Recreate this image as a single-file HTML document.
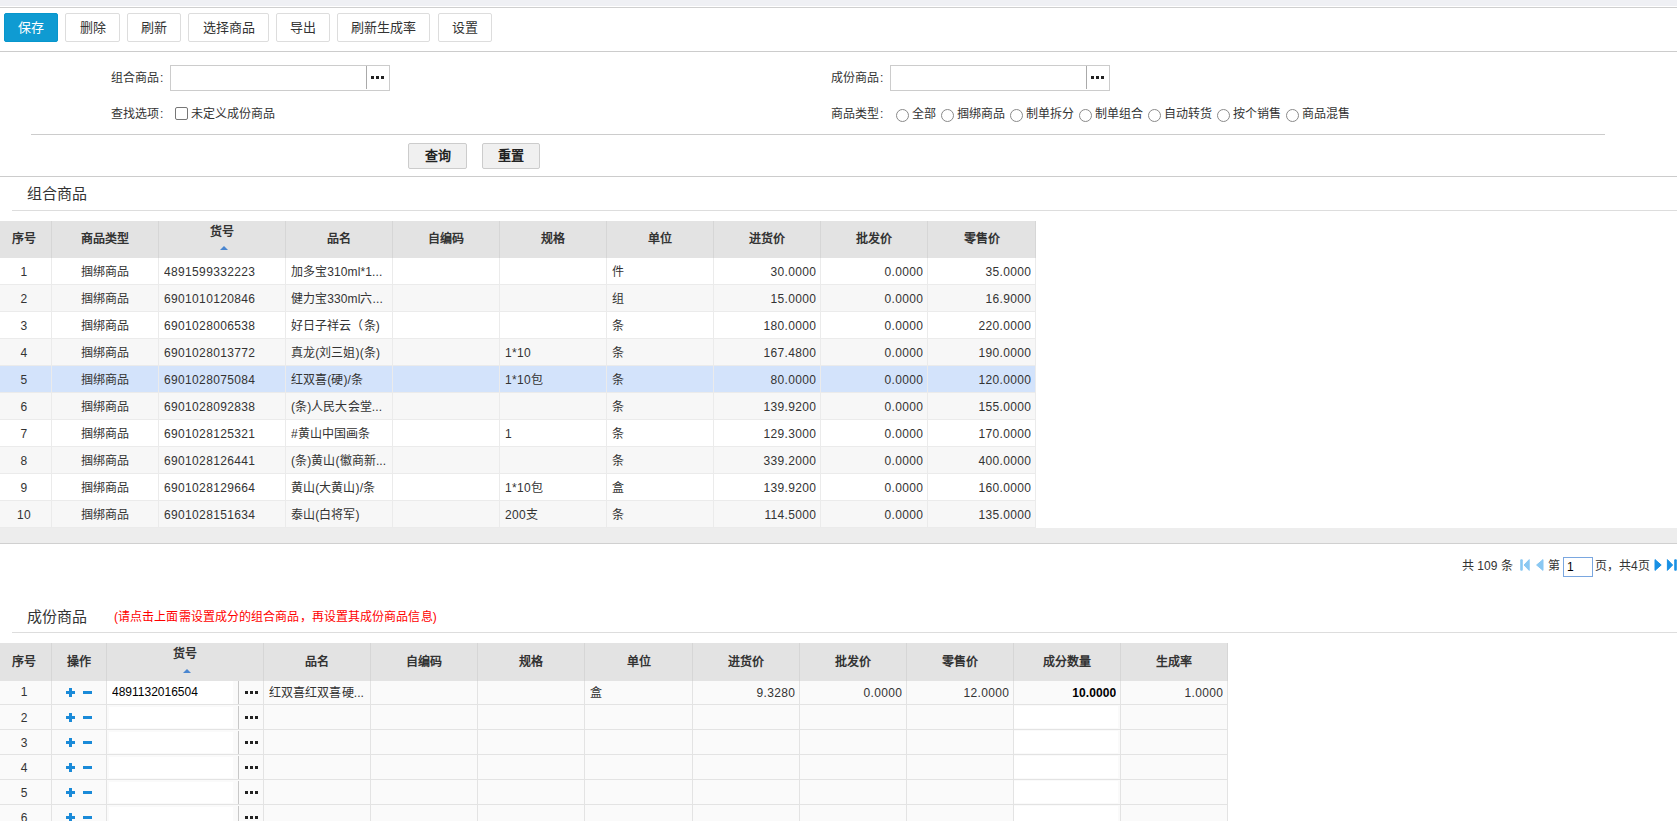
<!DOCTYPE html>
<html lang="zh-CN"><head><meta charset="utf-8"><style>
*{box-sizing:border-box;margin:0;padding:0}
html,body{width:1677px;height:821px;overflow:hidden;background:#fff;font-family:"Liberation Sans",sans-serif;font-size:12px;color:#333}
div{position:absolute}
.tb{top:13px;height:29px;border:1px solid #ddd;border-radius:2px;background:#fff;font-size:13px;line-height:28px;text-align:center;color:#333}
.tb.pri{background:#0f9bd2;border-color:#0796cc;color:#fff}
.lbl{font-size:12px;line-height:16px;color:#333;white-space:nowrap}
.inp{height:26px;border:1px solid #ccc;background:#fff}
.vd{width:1px;background:#aaa}
.dt{width:3px;height:3px;background:#222}
.chk{width:13px;height:13px;border:1px solid #767676;border-radius:2px;background:#fff}
.rad{width:13px;height:13px;border:1px solid #8a8a8a;border-radius:50%;background:#fff}
.qb{top:143px;height:26px;border:1px solid #ccc;border-radius:2px;background:#f0f0f0;font-size:13px;font-weight:bold;line-height:24px;text-align:center;color:#222}
.hl{height:1px;background:#ddd}
.title{font-size:15px;line-height:20px;color:#333;white-space:nowrap}
.cell{white-space:nowrap;overflow:hidden;font-size:12px;color:#333}
.th{font-weight:bold;color:#333;text-align:center}
.arr{width:0;height:0;border-left:4.5px solid transparent;border-right:4.5px solid transparent;border-bottom:4px solid #4a86d0}
.pl{background:#1a8ad8}
</style></head><body>
<div style="left:0;top:0;width:1677px;height:6px;background:#eff0f4"></div>
<div style="left:0;top:7px;width:1677px;height:1px;background:#cfcfcf"></div>
<div class="tb pri" style="left:4px;width:54px">保存</div>
<div class="tb" style="left:65px;width:55px">删除</div>
<div class="tb" style="left:127px;width:54px">刷新</div>
<div class="tb" style="left:188px;width:81px">选择商品</div>
<div class="tb" style="left:276px;width:54px">导出</div>
<div class="tb" style="left:337px;width:93px">刷新生成率</div>
<div class="tb" style="left:438px;width:54px">设置</div>
<div class="hl" style="left:0;top:51px;width:1677px;background:#ccc"></div>
<div class="lbl" style="left:111px;top:70px;">组合商品<span style="margin-left:1px">:</span></div>
<div class="inp" style="left:170px;top:65px;width:220px"></div>
<div class="vd" style="left:366px;top:66px;height:23px"></div>
<div class="dt" style="left:371px;top:76px;background:#222"></div>
<div class="dt" style="left:376px;top:76px;background:#222"></div>
<div class="dt" style="left:381px;top:76px;background:#222"></div>
<div class="lbl" style="left:111px;top:106px;">查找选项<span style="margin-left:1px">:</span></div>
<div class="chk" style="left:175px;top:107px"></div>
<div class="lbl" style="left:191px;top:106px;">未定义成份商品</div>
<div class="lbl" style="left:831px;top:70px;">成份商品<span style="margin-left:1px">:</span></div>
<div class="inp" style="left:890px;top:65px;width:220px"></div>
<div class="vd" style="left:1086px;top:66px;height:23px"></div>
<div class="dt" style="left:1091px;top:76px;background:#222"></div>
<div class="dt" style="left:1096px;top:76px;background:#222"></div>
<div class="dt" style="left:1101px;top:76px;background:#222"></div>
<div class="lbl" style="left:831px;top:106px;">商品类型<span style="margin-left:1px">:</span></div>
<div class="rad" style="left:896px;top:109px"></div>
<div class="lbl" style="left:912px;top:106px;">全部</div>
<div class="rad" style="left:941px;top:109px"></div>
<div class="lbl" style="left:957px;top:106px;">掴绑商品</div>
<div class="rad" style="left:1010px;top:109px"></div>
<div class="lbl" style="left:1026px;top:106px;">制单拆分</div>
<div class="rad" style="left:1079px;top:109px"></div>
<div class="lbl" style="left:1095px;top:106px;">制单组合</div>
<div class="rad" style="left:1148px;top:109px"></div>
<div class="lbl" style="left:1164px;top:106px;">自动转货</div>
<div class="rad" style="left:1217px;top:109px"></div>
<div class="lbl" style="left:1233px;top:106px;">按个销售</div>
<div class="rad" style="left:1286px;top:109px"></div>
<div class="lbl" style="left:1302px;top:106px;">商品混售</div>
<div class="hl" style="left:31px;top:134px;width:1574px;background:#ccc"></div>
<div class="qb" style="left:408px;width:59px">查询</div>
<div class="qb" style="left:482px;width:58px">重置</div>
<div class="hl" style="left:0;top:176px;width:1677px;background:#ccc"></div>
<div class="title" style="left:27px;top:184px">组合商品</div>
<div class="hl" style="left:12px;top:210px;width:1665px"></div>
<div style="left:0;top:221px;width:1036px;height:37px;background:#e3e3e3"></div>
<div style="left:51px;top:221px;width:1px;height:37px;background:#d6d6d6"></div>
<div style="left:158px;top:221px;width:1px;height:37px;background:#d6d6d6"></div>
<div style="left:285px;top:221px;width:1px;height:37px;background:#d6d6d6"></div>
<div style="left:392px;top:221px;width:1px;height:37px;background:#d6d6d6"></div>
<div style="left:499px;top:221px;width:1px;height:37px;background:#d6d6d6"></div>
<div style="left:606px;top:221px;width:1px;height:37px;background:#d6d6d6"></div>
<div style="left:713px;top:221px;width:1px;height:37px;background:#d6d6d6"></div>
<div style="left:820px;top:221px;width:1px;height:37px;background:#d6d6d6"></div>
<div style="left:927px;top:221px;width:1px;height:37px;background:#d6d6d6"></div>
<div style="left:1035px;top:221px;width:1px;height:37px;background:#d6d6d6"></div>
<div class="cell th" style="left:0px;top:221px;width:48px;height:37px;line-height:37px">序号</div>
<div class="cell th" style="left:52px;top:221px;width:106px;height:37px;line-height:37px">商品类型</div>
<div class="cell th" style="left:159px;top:224px;width:126px;height:16px;line-height:16px">货号</div>
<div class="arr" style="left:220px;top:246px"></div>
<div class="cell th" style="left:286px;top:221px;width:106px;height:37px;line-height:37px">品名</div>
<div class="cell th" style="left:393px;top:221px;width:106px;height:37px;line-height:37px">自编码</div>
<div class="cell th" style="left:500px;top:221px;width:106px;height:37px;line-height:37px">规格</div>
<div class="cell th" style="left:607px;top:221px;width:106px;height:37px;line-height:37px">单位</div>
<div class="cell th" style="left:714px;top:221px;width:106px;height:37px;line-height:37px">进货价</div>
<div class="cell th" style="left:821px;top:221px;width:106px;height:37px;line-height:37px">批发价</div>
<div class="cell th" style="left:928px;top:221px;width:107px;height:37px;line-height:37px">零售价</div>
<div style="left:0;top:258px;width:1035px;height:27px;background:#fff"></div>
<div style="left:0;top:284px;width:1035px;height:1px;background:#ebebeb"></div>
<div style="left:51px;top:258px;width:1px;height:27px;background:#ebebeb"></div>
<div style="left:158px;top:258px;width:1px;height:27px;background:#ebebeb"></div>
<div style="left:285px;top:258px;width:1px;height:27px;background:#ebebeb"></div>
<div style="left:392px;top:258px;width:1px;height:27px;background:#ebebeb"></div>
<div style="left:499px;top:258px;width:1px;height:27px;background:#ebebeb"></div>
<div style="left:606px;top:258px;width:1px;height:27px;background:#ebebeb"></div>
<div style="left:713px;top:258px;width:1px;height:27px;background:#ebebeb"></div>
<div style="left:820px;top:258px;width:1px;height:27px;background:#ebebeb"></div>
<div style="left:927px;top:258px;width:1px;height:27px;background:#ebebeb"></div>
<div style="left:1035px;top:258px;width:1px;height:27px;background:#ebebeb"></div>
<div class="cell" style="left:0px;width:48px;text-align:center;top:259px;height:26px;line-height:26px;letter-spacing:0.35px">1</div>
<div class="cell" style="left:52px;width:106px;text-align:center;top:259px;height:26px;line-height:26px">掴绑商品</div>
<div class="cell" style="left:164px;width:121px;text-align:left;top:259px;height:26px;line-height:26px;letter-spacing:0.35px">4891599332223</div>
<div class="cell" style="left:291px;width:101px;text-align:left;top:259px;height:26px;line-height:26px;letter-spacing:0.1px">加多宝310ml*1...</div>
<div class="cell" style="left:612px;width:101px;text-align:left;top:259px;height:26px;line-height:26px">件</div>
<div class="cell" style="left:714px;width:102.4px;text-align:right;top:259px;height:26px;line-height:26px;letter-spacing:0.35px">30.0000</div>
<div class="cell" style="left:821px;width:102.4px;text-align:right;top:259px;height:26px;line-height:26px;letter-spacing:0.35px">0.0000</div>
<div class="cell" style="left:928px;width:103.4px;text-align:right;top:259px;height:26px;line-height:26px;letter-spacing:0.35px">35.0000</div>
<div style="left:0;top:285px;width:1035px;height:27px;background:#f7f7f7"></div>
<div style="left:0;top:311px;width:1035px;height:1px;background:#ebebeb"></div>
<div style="left:51px;top:285px;width:1px;height:27px;background:#ebebeb"></div>
<div style="left:158px;top:285px;width:1px;height:27px;background:#ebebeb"></div>
<div style="left:285px;top:285px;width:1px;height:27px;background:#ebebeb"></div>
<div style="left:392px;top:285px;width:1px;height:27px;background:#ebebeb"></div>
<div style="left:499px;top:285px;width:1px;height:27px;background:#ebebeb"></div>
<div style="left:606px;top:285px;width:1px;height:27px;background:#ebebeb"></div>
<div style="left:713px;top:285px;width:1px;height:27px;background:#ebebeb"></div>
<div style="left:820px;top:285px;width:1px;height:27px;background:#ebebeb"></div>
<div style="left:927px;top:285px;width:1px;height:27px;background:#ebebeb"></div>
<div style="left:1035px;top:285px;width:1px;height:27px;background:#ebebeb"></div>
<div class="cell" style="left:0px;width:48px;text-align:center;top:286px;height:26px;line-height:26px;letter-spacing:0.35px">2</div>
<div class="cell" style="left:52px;width:106px;text-align:center;top:286px;height:26px;line-height:26px">掴绑商品</div>
<div class="cell" style="left:164px;width:121px;text-align:left;top:286px;height:26px;line-height:26px;letter-spacing:0.35px">6901010120846</div>
<div class="cell" style="left:291px;width:101px;text-align:left;top:286px;height:26px;line-height:26px;letter-spacing:0.1px">健力宝330ml六...</div>
<div class="cell" style="left:612px;width:101px;text-align:left;top:286px;height:26px;line-height:26px">组</div>
<div class="cell" style="left:714px;width:102.4px;text-align:right;top:286px;height:26px;line-height:26px;letter-spacing:0.35px">15.0000</div>
<div class="cell" style="left:821px;width:102.4px;text-align:right;top:286px;height:26px;line-height:26px;letter-spacing:0.35px">0.0000</div>
<div class="cell" style="left:928px;width:103.4px;text-align:right;top:286px;height:26px;line-height:26px;letter-spacing:0.35px">16.9000</div>
<div style="left:0;top:312px;width:1035px;height:27px;background:#fff"></div>
<div style="left:0;top:338px;width:1035px;height:1px;background:#ebebeb"></div>
<div style="left:51px;top:312px;width:1px;height:27px;background:#ebebeb"></div>
<div style="left:158px;top:312px;width:1px;height:27px;background:#ebebeb"></div>
<div style="left:285px;top:312px;width:1px;height:27px;background:#ebebeb"></div>
<div style="left:392px;top:312px;width:1px;height:27px;background:#ebebeb"></div>
<div style="left:499px;top:312px;width:1px;height:27px;background:#ebebeb"></div>
<div style="left:606px;top:312px;width:1px;height:27px;background:#ebebeb"></div>
<div style="left:713px;top:312px;width:1px;height:27px;background:#ebebeb"></div>
<div style="left:820px;top:312px;width:1px;height:27px;background:#ebebeb"></div>
<div style="left:927px;top:312px;width:1px;height:27px;background:#ebebeb"></div>
<div style="left:1035px;top:312px;width:1px;height:27px;background:#ebebeb"></div>
<div class="cell" style="left:0px;width:48px;text-align:center;top:313px;height:26px;line-height:26px;letter-spacing:0.35px">3</div>
<div class="cell" style="left:52px;width:106px;text-align:center;top:313px;height:26px;line-height:26px">掴绑商品</div>
<div class="cell" style="left:164px;width:121px;text-align:left;top:313px;height:26px;line-height:26px;letter-spacing:0.35px">6901028006538</div>
<div class="cell" style="left:291px;width:101px;text-align:left;top:313px;height:26px;line-height:26px;letter-spacing:0.1px">好日子祥云（条)</div>
<div class="cell" style="left:612px;width:101px;text-align:left;top:313px;height:26px;line-height:26px">条</div>
<div class="cell" style="left:714px;width:102.4px;text-align:right;top:313px;height:26px;line-height:26px;letter-spacing:0.35px">180.0000</div>
<div class="cell" style="left:821px;width:102.4px;text-align:right;top:313px;height:26px;line-height:26px;letter-spacing:0.35px">0.0000</div>
<div class="cell" style="left:928px;width:103.4px;text-align:right;top:313px;height:26px;line-height:26px;letter-spacing:0.35px">220.0000</div>
<div style="left:0;top:339px;width:1035px;height:27px;background:#f7f7f7"></div>
<div style="left:0;top:365px;width:1035px;height:1px;background:#ebebeb"></div>
<div style="left:51px;top:339px;width:1px;height:27px;background:#ebebeb"></div>
<div style="left:158px;top:339px;width:1px;height:27px;background:#ebebeb"></div>
<div style="left:285px;top:339px;width:1px;height:27px;background:#ebebeb"></div>
<div style="left:392px;top:339px;width:1px;height:27px;background:#ebebeb"></div>
<div style="left:499px;top:339px;width:1px;height:27px;background:#ebebeb"></div>
<div style="left:606px;top:339px;width:1px;height:27px;background:#ebebeb"></div>
<div style="left:713px;top:339px;width:1px;height:27px;background:#ebebeb"></div>
<div style="left:820px;top:339px;width:1px;height:27px;background:#ebebeb"></div>
<div style="left:927px;top:339px;width:1px;height:27px;background:#ebebeb"></div>
<div style="left:1035px;top:339px;width:1px;height:27px;background:#ebebeb"></div>
<div class="cell" style="left:0px;width:48px;text-align:center;top:340px;height:26px;line-height:26px;letter-spacing:0.35px">4</div>
<div class="cell" style="left:52px;width:106px;text-align:center;top:340px;height:26px;line-height:26px">掴绑商品</div>
<div class="cell" style="left:164px;width:121px;text-align:left;top:340px;height:26px;line-height:26px;letter-spacing:0.35px">6901028013772</div>
<div class="cell" style="left:291px;width:101px;text-align:left;top:340px;height:26px;line-height:26px;letter-spacing:0.1px">真龙(刘三姐)(条)</div>
<div class="cell" style="left:505px;width:101px;text-align:left;top:340px;height:26px;line-height:26px;letter-spacing:0.3px">1*10</div>
<div class="cell" style="left:612px;width:101px;text-align:left;top:340px;height:26px;line-height:26px">条</div>
<div class="cell" style="left:714px;width:102.4px;text-align:right;top:340px;height:26px;line-height:26px;letter-spacing:0.35px">167.4800</div>
<div class="cell" style="left:821px;width:102.4px;text-align:right;top:340px;height:26px;line-height:26px;letter-spacing:0.35px">0.0000</div>
<div class="cell" style="left:928px;width:103.4px;text-align:right;top:340px;height:26px;line-height:26px;letter-spacing:0.35px">190.0000</div>
<div style="left:0;top:366px;width:1035px;height:27px;background:#d3e3fb"></div>
<div style="left:0;top:392px;width:1035px;height:1px;background:#ebebeb"></div>
<div style="left:51px;top:366px;width:1px;height:27px;background:#ebebeb"></div>
<div style="left:158px;top:366px;width:1px;height:27px;background:#ebebeb"></div>
<div style="left:285px;top:366px;width:1px;height:27px;background:#ebebeb"></div>
<div style="left:392px;top:366px;width:1px;height:27px;background:#ebebeb"></div>
<div style="left:499px;top:366px;width:1px;height:27px;background:#ebebeb"></div>
<div style="left:606px;top:366px;width:1px;height:27px;background:#ebebeb"></div>
<div style="left:713px;top:366px;width:1px;height:27px;background:#ebebeb"></div>
<div style="left:820px;top:366px;width:1px;height:27px;background:#ebebeb"></div>
<div style="left:927px;top:366px;width:1px;height:27px;background:#ebebeb"></div>
<div style="left:1035px;top:366px;width:1px;height:27px;background:#ebebeb"></div>
<div class="cell" style="left:0px;width:48px;text-align:center;top:367px;height:26px;line-height:26px;letter-spacing:0.35px">5</div>
<div class="cell" style="left:52px;width:106px;text-align:center;top:367px;height:26px;line-height:26px">掴绑商品</div>
<div class="cell" style="left:164px;width:121px;text-align:left;top:367px;height:26px;line-height:26px;letter-spacing:0.35px">6901028075084</div>
<div class="cell" style="left:291px;width:101px;text-align:left;top:367px;height:26px;line-height:26px;letter-spacing:0.1px">红双喜(硬)/条</div>
<div class="cell" style="left:505px;width:101px;text-align:left;top:367px;height:26px;line-height:26px;letter-spacing:0.3px">1*10包</div>
<div class="cell" style="left:612px;width:101px;text-align:left;top:367px;height:26px;line-height:26px">条</div>
<div class="cell" style="left:714px;width:102.4px;text-align:right;top:367px;height:26px;line-height:26px;letter-spacing:0.35px">80.0000</div>
<div class="cell" style="left:821px;width:102.4px;text-align:right;top:367px;height:26px;line-height:26px;letter-spacing:0.35px">0.0000</div>
<div class="cell" style="left:928px;width:103.4px;text-align:right;top:367px;height:26px;line-height:26px;letter-spacing:0.35px">120.0000</div>
<div style="left:0;top:393px;width:1035px;height:27px;background:#f7f7f7"></div>
<div style="left:0;top:419px;width:1035px;height:1px;background:#ebebeb"></div>
<div style="left:51px;top:393px;width:1px;height:27px;background:#ebebeb"></div>
<div style="left:158px;top:393px;width:1px;height:27px;background:#ebebeb"></div>
<div style="left:285px;top:393px;width:1px;height:27px;background:#ebebeb"></div>
<div style="left:392px;top:393px;width:1px;height:27px;background:#ebebeb"></div>
<div style="left:499px;top:393px;width:1px;height:27px;background:#ebebeb"></div>
<div style="left:606px;top:393px;width:1px;height:27px;background:#ebebeb"></div>
<div style="left:713px;top:393px;width:1px;height:27px;background:#ebebeb"></div>
<div style="left:820px;top:393px;width:1px;height:27px;background:#ebebeb"></div>
<div style="left:927px;top:393px;width:1px;height:27px;background:#ebebeb"></div>
<div style="left:1035px;top:393px;width:1px;height:27px;background:#ebebeb"></div>
<div class="cell" style="left:0px;width:48px;text-align:center;top:394px;height:26px;line-height:26px;letter-spacing:0.35px">6</div>
<div class="cell" style="left:52px;width:106px;text-align:center;top:394px;height:26px;line-height:26px">掴绑商品</div>
<div class="cell" style="left:164px;width:121px;text-align:left;top:394px;height:26px;line-height:26px;letter-spacing:0.35px">6901028092838</div>
<div class="cell" style="left:291px;width:101px;text-align:left;top:394px;height:26px;line-height:26px;letter-spacing:0.1px">(条)人民大会堂...</div>
<div class="cell" style="left:612px;width:101px;text-align:left;top:394px;height:26px;line-height:26px">条</div>
<div class="cell" style="left:714px;width:102.4px;text-align:right;top:394px;height:26px;line-height:26px;letter-spacing:0.35px">139.9200</div>
<div class="cell" style="left:821px;width:102.4px;text-align:right;top:394px;height:26px;line-height:26px;letter-spacing:0.35px">0.0000</div>
<div class="cell" style="left:928px;width:103.4px;text-align:right;top:394px;height:26px;line-height:26px;letter-spacing:0.35px">155.0000</div>
<div style="left:0;top:420px;width:1035px;height:27px;background:#fff"></div>
<div style="left:0;top:446px;width:1035px;height:1px;background:#ebebeb"></div>
<div style="left:51px;top:420px;width:1px;height:27px;background:#ebebeb"></div>
<div style="left:158px;top:420px;width:1px;height:27px;background:#ebebeb"></div>
<div style="left:285px;top:420px;width:1px;height:27px;background:#ebebeb"></div>
<div style="left:392px;top:420px;width:1px;height:27px;background:#ebebeb"></div>
<div style="left:499px;top:420px;width:1px;height:27px;background:#ebebeb"></div>
<div style="left:606px;top:420px;width:1px;height:27px;background:#ebebeb"></div>
<div style="left:713px;top:420px;width:1px;height:27px;background:#ebebeb"></div>
<div style="left:820px;top:420px;width:1px;height:27px;background:#ebebeb"></div>
<div style="left:927px;top:420px;width:1px;height:27px;background:#ebebeb"></div>
<div style="left:1035px;top:420px;width:1px;height:27px;background:#ebebeb"></div>
<div class="cell" style="left:0px;width:48px;text-align:center;top:421px;height:26px;line-height:26px;letter-spacing:0.35px">7</div>
<div class="cell" style="left:52px;width:106px;text-align:center;top:421px;height:26px;line-height:26px">掴绑商品</div>
<div class="cell" style="left:164px;width:121px;text-align:left;top:421px;height:26px;line-height:26px;letter-spacing:0.35px">6901028125321</div>
<div class="cell" style="left:291px;width:101px;text-align:left;top:421px;height:26px;line-height:26px;letter-spacing:0.1px">#黄山中国画条</div>
<div class="cell" style="left:505px;width:101px;text-align:left;top:421px;height:26px;line-height:26px;letter-spacing:0.3px">1</div>
<div class="cell" style="left:612px;width:101px;text-align:left;top:421px;height:26px;line-height:26px">条</div>
<div class="cell" style="left:714px;width:102.4px;text-align:right;top:421px;height:26px;line-height:26px;letter-spacing:0.35px">129.3000</div>
<div class="cell" style="left:821px;width:102.4px;text-align:right;top:421px;height:26px;line-height:26px;letter-spacing:0.35px">0.0000</div>
<div class="cell" style="left:928px;width:103.4px;text-align:right;top:421px;height:26px;line-height:26px;letter-spacing:0.35px">170.0000</div>
<div style="left:0;top:447px;width:1035px;height:27px;background:#f7f7f7"></div>
<div style="left:0;top:473px;width:1035px;height:1px;background:#ebebeb"></div>
<div style="left:51px;top:447px;width:1px;height:27px;background:#ebebeb"></div>
<div style="left:158px;top:447px;width:1px;height:27px;background:#ebebeb"></div>
<div style="left:285px;top:447px;width:1px;height:27px;background:#ebebeb"></div>
<div style="left:392px;top:447px;width:1px;height:27px;background:#ebebeb"></div>
<div style="left:499px;top:447px;width:1px;height:27px;background:#ebebeb"></div>
<div style="left:606px;top:447px;width:1px;height:27px;background:#ebebeb"></div>
<div style="left:713px;top:447px;width:1px;height:27px;background:#ebebeb"></div>
<div style="left:820px;top:447px;width:1px;height:27px;background:#ebebeb"></div>
<div style="left:927px;top:447px;width:1px;height:27px;background:#ebebeb"></div>
<div style="left:1035px;top:447px;width:1px;height:27px;background:#ebebeb"></div>
<div class="cell" style="left:0px;width:48px;text-align:center;top:448px;height:26px;line-height:26px;letter-spacing:0.35px">8</div>
<div class="cell" style="left:52px;width:106px;text-align:center;top:448px;height:26px;line-height:26px">掴绑商品</div>
<div class="cell" style="left:164px;width:121px;text-align:left;top:448px;height:26px;line-height:26px;letter-spacing:0.35px">6901028126441</div>
<div class="cell" style="left:291px;width:101px;text-align:left;top:448px;height:26px;line-height:26px;letter-spacing:0.1px">(条)黄山(徽商新...</div>
<div class="cell" style="left:612px;width:101px;text-align:left;top:448px;height:26px;line-height:26px">条</div>
<div class="cell" style="left:714px;width:102.4px;text-align:right;top:448px;height:26px;line-height:26px;letter-spacing:0.35px">339.2000</div>
<div class="cell" style="left:821px;width:102.4px;text-align:right;top:448px;height:26px;line-height:26px;letter-spacing:0.35px">0.0000</div>
<div class="cell" style="left:928px;width:103.4px;text-align:right;top:448px;height:26px;line-height:26px;letter-spacing:0.35px">400.0000</div>
<div style="left:0;top:474px;width:1035px;height:27px;background:#fff"></div>
<div style="left:0;top:500px;width:1035px;height:1px;background:#ebebeb"></div>
<div style="left:51px;top:474px;width:1px;height:27px;background:#ebebeb"></div>
<div style="left:158px;top:474px;width:1px;height:27px;background:#ebebeb"></div>
<div style="left:285px;top:474px;width:1px;height:27px;background:#ebebeb"></div>
<div style="left:392px;top:474px;width:1px;height:27px;background:#ebebeb"></div>
<div style="left:499px;top:474px;width:1px;height:27px;background:#ebebeb"></div>
<div style="left:606px;top:474px;width:1px;height:27px;background:#ebebeb"></div>
<div style="left:713px;top:474px;width:1px;height:27px;background:#ebebeb"></div>
<div style="left:820px;top:474px;width:1px;height:27px;background:#ebebeb"></div>
<div style="left:927px;top:474px;width:1px;height:27px;background:#ebebeb"></div>
<div style="left:1035px;top:474px;width:1px;height:27px;background:#ebebeb"></div>
<div class="cell" style="left:0px;width:48px;text-align:center;top:475px;height:26px;line-height:26px;letter-spacing:0.35px">9</div>
<div class="cell" style="left:52px;width:106px;text-align:center;top:475px;height:26px;line-height:26px">掴绑商品</div>
<div class="cell" style="left:164px;width:121px;text-align:left;top:475px;height:26px;line-height:26px;letter-spacing:0.35px">6901028129664</div>
<div class="cell" style="left:291px;width:101px;text-align:left;top:475px;height:26px;line-height:26px;letter-spacing:0.1px">黄山(大黄山)/条</div>
<div class="cell" style="left:505px;width:101px;text-align:left;top:475px;height:26px;line-height:26px;letter-spacing:0.3px">1*10包</div>
<div class="cell" style="left:612px;width:101px;text-align:left;top:475px;height:26px;line-height:26px">盒</div>
<div class="cell" style="left:714px;width:102.4px;text-align:right;top:475px;height:26px;line-height:26px;letter-spacing:0.35px">139.9200</div>
<div class="cell" style="left:821px;width:102.4px;text-align:right;top:475px;height:26px;line-height:26px;letter-spacing:0.35px">0.0000</div>
<div class="cell" style="left:928px;width:103.4px;text-align:right;top:475px;height:26px;line-height:26px;letter-spacing:0.35px">160.0000</div>
<div style="left:0;top:501px;width:1035px;height:27px;background:#f7f7f7"></div>
<div style="left:0;top:527px;width:1035px;height:1px;background:#ebebeb"></div>
<div style="left:51px;top:501px;width:1px;height:27px;background:#ebebeb"></div>
<div style="left:158px;top:501px;width:1px;height:27px;background:#ebebeb"></div>
<div style="left:285px;top:501px;width:1px;height:27px;background:#ebebeb"></div>
<div style="left:392px;top:501px;width:1px;height:27px;background:#ebebeb"></div>
<div style="left:499px;top:501px;width:1px;height:27px;background:#ebebeb"></div>
<div style="left:606px;top:501px;width:1px;height:27px;background:#ebebeb"></div>
<div style="left:713px;top:501px;width:1px;height:27px;background:#ebebeb"></div>
<div style="left:820px;top:501px;width:1px;height:27px;background:#ebebeb"></div>
<div style="left:927px;top:501px;width:1px;height:27px;background:#ebebeb"></div>
<div style="left:1035px;top:501px;width:1px;height:27px;background:#ebebeb"></div>
<div class="cell" style="left:0px;width:48px;text-align:center;top:502px;height:26px;line-height:26px;letter-spacing:0.35px">10</div>
<div class="cell" style="left:52px;width:106px;text-align:center;top:502px;height:26px;line-height:26px">掴绑商品</div>
<div class="cell" style="left:164px;width:121px;text-align:left;top:502px;height:26px;line-height:26px;letter-spacing:0.35px">6901028151634</div>
<div class="cell" style="left:291px;width:101px;text-align:left;top:502px;height:26px;line-height:26px;letter-spacing:0.1px">泰山(白将军)</div>
<div class="cell" style="left:505px;width:101px;text-align:left;top:502px;height:26px;line-height:26px;letter-spacing:0.3px">200支</div>
<div class="cell" style="left:612px;width:101px;text-align:left;top:502px;height:26px;line-height:26px">条</div>
<div class="cell" style="left:714px;width:102.4px;text-align:right;top:502px;height:26px;line-height:26px;letter-spacing:0.35px">114.5000</div>
<div class="cell" style="left:821px;width:102.4px;text-align:right;top:502px;height:26px;line-height:26px;letter-spacing:0.35px">0.0000</div>
<div class="cell" style="left:928px;width:103.4px;text-align:right;top:502px;height:26px;line-height:26px;letter-spacing:0.35px">135.0000</div>
<div style="left:0;top:528px;width:1677px;height:15px;background:#ededed"></div>
<div style="left:0;top:543px;width:1677px;height:1px;background:#d0d0d0"></div>
<div class="lbl" style="left:1462px;top:558px">共 109 条</div>
<div style="left:1563px;top:557px;width:30px;height:20px;border:1px solid #7aa7e0;background:#fff"></div>
<div class="lbl" style="left:1567px;top:559px;color:#000">1</div>
<div class="lbl" style="left:1548px;top:558px">第</div>
<div class="lbl" style="left:1595px;top:558px">页，共4页</div>
<svg style="position:absolute;left:1515px;top:555px" width="40" height="20"><rect x="5.2" y="4.2" width="2.6" height="11.6" rx="1" fill="#8ac8f2"/><path d="M14.2 4.6 L9 10 L14.2 15.4Z" fill="#8ac8f2" stroke="#8ac8f2" stroke-width="1" stroke-linejoin="round"/><path d="M28 4.6 L21.6 10 L28 15.4Z" fill="#8ac8f2" stroke="#8ac8f2" stroke-width="1" stroke-linejoin="round"/></svg>
<svg style="position:absolute;left:1645px;top:555px" width="32" height="20"><path d="M10 4.6 L16.2 10 L10 15.4Z" fill="#1890e4" stroke="#1890e4" stroke-width="1" stroke-linejoin="round"/><path d="M22.4 4.6 L27.6 10 L22.4 15.4Z" fill="#1890e4" stroke="#1890e4" stroke-width="1" stroke-linejoin="round"/><rect x="29.2" y="4.2" width="2.6" height="11.6" rx="1" fill="#1890e4"/></svg>
<div class="title" style="left:27px;top:607px">成份商品</div>
<div class="lbl" style="left:114px;top:609px;color:#f00;letter-spacing:0.1px">(请点击上面需设置成分的组合商品，再设置其成份商品信息)</div>
<div class="hl" style="left:12px;top:632px;width:1665px"></div>
<div style="left:0;top:643px;width:1228px;height:38px;background:#e3e3e3"></div>
<div style="left:51px;top:643px;width:1px;height:38px;background:#d6d6d6"></div>
<div style="left:106px;top:643px;width:1px;height:38px;background:#d6d6d6"></div>
<div style="left:263px;top:643px;width:1px;height:38px;background:#d6d6d6"></div>
<div style="left:370px;top:643px;width:1px;height:38px;background:#d6d6d6"></div>
<div style="left:477px;top:643px;width:1px;height:38px;background:#d6d6d6"></div>
<div style="left:584px;top:643px;width:1px;height:38px;background:#d6d6d6"></div>
<div style="left:692px;top:643px;width:1px;height:38px;background:#d6d6d6"></div>
<div style="left:799px;top:643px;width:1px;height:38px;background:#d6d6d6"></div>
<div style="left:906px;top:643px;width:1px;height:38px;background:#d6d6d6"></div>
<div style="left:1013px;top:643px;width:1px;height:38px;background:#d6d6d6"></div>
<div style="left:1120px;top:643px;width:1px;height:38px;background:#d6d6d6"></div>
<div style="left:1227px;top:643px;width:1px;height:38px;background:#d6d6d6"></div>
<div class="cell th" style="left:0px;top:643px;width:48px;height:38px;line-height:38px">序号</div>
<div class="cell th" style="left:52px;top:643px;width:54px;height:38px;line-height:38px">操作</div>
<div class="cell th" style="left:107px;top:646px;width:156px;height:16px;line-height:16px">货号</div>
<div class="arr" style="left:183px;top:669px"></div>
<div class="cell th" style="left:264px;top:643px;width:106px;height:38px;line-height:38px">品名</div>
<div class="cell th" style="left:371px;top:643px;width:106px;height:38px;line-height:38px">自编码</div>
<div class="cell th" style="left:478px;top:643px;width:106px;height:38px;line-height:38px">规格</div>
<div class="cell th" style="left:585px;top:643px;width:107px;height:38px;line-height:38px">单位</div>
<div class="cell th" style="left:693px;top:643px;width:106px;height:38px;line-height:38px">进货价</div>
<div class="cell th" style="left:800px;top:643px;width:106px;height:38px;line-height:38px">批发价</div>
<div class="cell th" style="left:907px;top:643px;width:106px;height:38px;line-height:38px">零售价</div>
<div class="cell th" style="left:1014px;top:643px;width:106px;height:38px;line-height:38px">成分数量</div>
<div class="cell th" style="left:1121px;top:643px;width:106px;height:38px;line-height:38px">生成率</div>
<div style="left:0;top:681px;width:1227px;height:24px;background:#fafafa"></div>
<div style="left:0;top:704px;width:1227px;height:1px;background:#e3e3e3"></div>
<div style="left:51px;top:681px;width:1px;height:24px;background:#e3e3e3"></div>
<div style="left:106px;top:681px;width:1px;height:24px;background:#e3e3e3"></div>
<div style="left:263px;top:681px;width:1px;height:24px;background:#e3e3e3"></div>
<div style="left:370px;top:681px;width:1px;height:24px;background:#e3e3e3"></div>
<div style="left:477px;top:681px;width:1px;height:24px;background:#e3e3e3"></div>
<div style="left:584px;top:681px;width:1px;height:24px;background:#e3e3e3"></div>
<div style="left:692px;top:681px;width:1px;height:24px;background:#e3e3e3"></div>
<div style="left:799px;top:681px;width:1px;height:24px;background:#e3e3e3"></div>
<div style="left:906px;top:681px;width:1px;height:24px;background:#e3e3e3"></div>
<div style="left:1013px;top:681px;width:1px;height:24px;background:#e3e3e3"></div>
<div style="left:1120px;top:681px;width:1px;height:24px;background:#e3e3e3"></div>
<div style="left:1227px;top:681px;width:1px;height:24px;background:#e3e3e3"></div>
<div style="left:107px;top:681px;width:126px;height:23px;background:#fff"></div>
<div class="vd" style="left:238px;top:681px;height:23px;background:#c8c8c8"></div>
<div class="dt" style="left:245px;top:691px;background:#222"></div>
<div class="dt" style="left:250px;top:691px;background:#222"></div>
<div class="dt" style="left:255px;top:691px;background:#222"></div>
<div class="cell" style="left:0;top:681px;width:48px;height:23px;line-height:23px;text-align:center">1</div>
<div class="pl" style="left:66px;top:691px;width:9px;height:3px"></div>
<div class="pl" style="left:69px;top:688px;width:3px;height:9px"></div>
<div class="pl" style="left:83px;top:691px;width:9px;height:3px"></div>
<div style="left:0;top:705px;width:1227px;height:25px;background:#fafafa"></div>
<div style="left:0;top:729px;width:1227px;height:1px;background:#e3e3e3"></div>
<div style="left:51px;top:705px;width:1px;height:25px;background:#e3e3e3"></div>
<div style="left:106px;top:705px;width:1px;height:25px;background:#e3e3e3"></div>
<div style="left:263px;top:705px;width:1px;height:25px;background:#e3e3e3"></div>
<div style="left:370px;top:705px;width:1px;height:25px;background:#e3e3e3"></div>
<div style="left:477px;top:705px;width:1px;height:25px;background:#e3e3e3"></div>
<div style="left:584px;top:705px;width:1px;height:25px;background:#e3e3e3"></div>
<div style="left:692px;top:705px;width:1px;height:25px;background:#e3e3e3"></div>
<div style="left:799px;top:705px;width:1px;height:25px;background:#e3e3e3"></div>
<div style="left:906px;top:705px;width:1px;height:25px;background:#e3e3e3"></div>
<div style="left:1013px;top:705px;width:1px;height:25px;background:#e3e3e3"></div>
<div style="left:1120px;top:705px;width:1px;height:25px;background:#e3e3e3"></div>
<div style="left:1227px;top:705px;width:1px;height:25px;background:#e3e3e3"></div>
<div style="left:109px;top:707px;width:124px;height:21px;background:#fff"></div>
<div class="vd" style="left:238px;top:706px;height:23px;background:#c8c8c8"></div>
<div class="dt" style="left:245px;top:716px;background:#222"></div>
<div class="dt" style="left:250px;top:716px;background:#222"></div>
<div class="dt" style="left:255px;top:716px;background:#222"></div>
<div style="left:1014px;top:706px;width:104px;height:22px;background:#fff"></div>
<div class="cell" style="left:0;top:706px;width:48px;height:24px;line-height:24px;text-align:center">2</div>
<div class="pl" style="left:66px;top:716px;width:9px;height:3px"></div>
<div class="pl" style="left:69px;top:713px;width:3px;height:9px"></div>
<div class="pl" style="left:83px;top:716px;width:9px;height:3px"></div>
<div style="left:0;top:730px;width:1227px;height:25px;background:#fafafa"></div>
<div style="left:0;top:754px;width:1227px;height:1px;background:#e3e3e3"></div>
<div style="left:51px;top:730px;width:1px;height:25px;background:#e3e3e3"></div>
<div style="left:106px;top:730px;width:1px;height:25px;background:#e3e3e3"></div>
<div style="left:263px;top:730px;width:1px;height:25px;background:#e3e3e3"></div>
<div style="left:370px;top:730px;width:1px;height:25px;background:#e3e3e3"></div>
<div style="left:477px;top:730px;width:1px;height:25px;background:#e3e3e3"></div>
<div style="left:584px;top:730px;width:1px;height:25px;background:#e3e3e3"></div>
<div style="left:692px;top:730px;width:1px;height:25px;background:#e3e3e3"></div>
<div style="left:799px;top:730px;width:1px;height:25px;background:#e3e3e3"></div>
<div style="left:906px;top:730px;width:1px;height:25px;background:#e3e3e3"></div>
<div style="left:1013px;top:730px;width:1px;height:25px;background:#e3e3e3"></div>
<div style="left:1120px;top:730px;width:1px;height:25px;background:#e3e3e3"></div>
<div style="left:1227px;top:730px;width:1px;height:25px;background:#e3e3e3"></div>
<div style="left:109px;top:732px;width:124px;height:21px;background:#fff"></div>
<div class="vd" style="left:238px;top:731px;height:23px;background:#c8c8c8"></div>
<div class="dt" style="left:245px;top:741px;background:#222"></div>
<div class="dt" style="left:250px;top:741px;background:#222"></div>
<div class="dt" style="left:255px;top:741px;background:#222"></div>
<div style="left:1014px;top:731px;width:104px;height:22px;background:#fff"></div>
<div class="cell" style="left:0;top:731px;width:48px;height:24px;line-height:24px;text-align:center">3</div>
<div class="pl" style="left:66px;top:741px;width:9px;height:3px"></div>
<div class="pl" style="left:69px;top:738px;width:3px;height:9px"></div>
<div class="pl" style="left:83px;top:741px;width:9px;height:3px"></div>
<div style="left:0;top:755px;width:1227px;height:25px;background:#fafafa"></div>
<div style="left:0;top:779px;width:1227px;height:1px;background:#e3e3e3"></div>
<div style="left:51px;top:755px;width:1px;height:25px;background:#e3e3e3"></div>
<div style="left:106px;top:755px;width:1px;height:25px;background:#e3e3e3"></div>
<div style="left:263px;top:755px;width:1px;height:25px;background:#e3e3e3"></div>
<div style="left:370px;top:755px;width:1px;height:25px;background:#e3e3e3"></div>
<div style="left:477px;top:755px;width:1px;height:25px;background:#e3e3e3"></div>
<div style="left:584px;top:755px;width:1px;height:25px;background:#e3e3e3"></div>
<div style="left:692px;top:755px;width:1px;height:25px;background:#e3e3e3"></div>
<div style="left:799px;top:755px;width:1px;height:25px;background:#e3e3e3"></div>
<div style="left:906px;top:755px;width:1px;height:25px;background:#e3e3e3"></div>
<div style="left:1013px;top:755px;width:1px;height:25px;background:#e3e3e3"></div>
<div style="left:1120px;top:755px;width:1px;height:25px;background:#e3e3e3"></div>
<div style="left:1227px;top:755px;width:1px;height:25px;background:#e3e3e3"></div>
<div style="left:109px;top:757px;width:124px;height:21px;background:#fff"></div>
<div class="vd" style="left:238px;top:756px;height:23px;background:#c8c8c8"></div>
<div class="dt" style="left:245px;top:766px;background:#222"></div>
<div class="dt" style="left:250px;top:766px;background:#222"></div>
<div class="dt" style="left:255px;top:766px;background:#222"></div>
<div style="left:1014px;top:756px;width:104px;height:22px;background:#fff"></div>
<div class="cell" style="left:0;top:756px;width:48px;height:24px;line-height:24px;text-align:center">4</div>
<div class="pl" style="left:66px;top:766px;width:9px;height:3px"></div>
<div class="pl" style="left:69px;top:763px;width:3px;height:9px"></div>
<div class="pl" style="left:83px;top:766px;width:9px;height:3px"></div>
<div style="left:0;top:780px;width:1227px;height:25px;background:#fafafa"></div>
<div style="left:0;top:804px;width:1227px;height:1px;background:#e3e3e3"></div>
<div style="left:51px;top:780px;width:1px;height:25px;background:#e3e3e3"></div>
<div style="left:106px;top:780px;width:1px;height:25px;background:#e3e3e3"></div>
<div style="left:263px;top:780px;width:1px;height:25px;background:#e3e3e3"></div>
<div style="left:370px;top:780px;width:1px;height:25px;background:#e3e3e3"></div>
<div style="left:477px;top:780px;width:1px;height:25px;background:#e3e3e3"></div>
<div style="left:584px;top:780px;width:1px;height:25px;background:#e3e3e3"></div>
<div style="left:692px;top:780px;width:1px;height:25px;background:#e3e3e3"></div>
<div style="left:799px;top:780px;width:1px;height:25px;background:#e3e3e3"></div>
<div style="left:906px;top:780px;width:1px;height:25px;background:#e3e3e3"></div>
<div style="left:1013px;top:780px;width:1px;height:25px;background:#e3e3e3"></div>
<div style="left:1120px;top:780px;width:1px;height:25px;background:#e3e3e3"></div>
<div style="left:1227px;top:780px;width:1px;height:25px;background:#e3e3e3"></div>
<div style="left:109px;top:782px;width:124px;height:21px;background:#fff"></div>
<div class="vd" style="left:238px;top:781px;height:23px;background:#c8c8c8"></div>
<div class="dt" style="left:245px;top:791px;background:#222"></div>
<div class="dt" style="left:250px;top:791px;background:#222"></div>
<div class="dt" style="left:255px;top:791px;background:#222"></div>
<div style="left:1014px;top:781px;width:104px;height:22px;background:#fff"></div>
<div class="cell" style="left:0;top:781px;width:48px;height:24px;line-height:24px;text-align:center">5</div>
<div class="pl" style="left:66px;top:791px;width:9px;height:3px"></div>
<div class="pl" style="left:69px;top:788px;width:3px;height:9px"></div>
<div class="pl" style="left:83px;top:791px;width:9px;height:3px"></div>
<div style="left:0;top:805px;width:1227px;height:25px;background:#fafafa"></div>
<div style="left:0;top:829px;width:1227px;height:1px;background:#e3e3e3"></div>
<div style="left:51px;top:805px;width:1px;height:25px;background:#e3e3e3"></div>
<div style="left:106px;top:805px;width:1px;height:25px;background:#e3e3e3"></div>
<div style="left:263px;top:805px;width:1px;height:25px;background:#e3e3e3"></div>
<div style="left:370px;top:805px;width:1px;height:25px;background:#e3e3e3"></div>
<div style="left:477px;top:805px;width:1px;height:25px;background:#e3e3e3"></div>
<div style="left:584px;top:805px;width:1px;height:25px;background:#e3e3e3"></div>
<div style="left:692px;top:805px;width:1px;height:25px;background:#e3e3e3"></div>
<div style="left:799px;top:805px;width:1px;height:25px;background:#e3e3e3"></div>
<div style="left:906px;top:805px;width:1px;height:25px;background:#e3e3e3"></div>
<div style="left:1013px;top:805px;width:1px;height:25px;background:#e3e3e3"></div>
<div style="left:1120px;top:805px;width:1px;height:25px;background:#e3e3e3"></div>
<div style="left:1227px;top:805px;width:1px;height:25px;background:#e3e3e3"></div>
<div style="left:109px;top:807px;width:124px;height:21px;background:#fff"></div>
<div class="vd" style="left:238px;top:806px;height:23px;background:#c8c8c8"></div>
<div class="dt" style="left:245px;top:816px;background:#222"></div>
<div class="dt" style="left:250px;top:816px;background:#222"></div>
<div class="dt" style="left:255px;top:816px;background:#222"></div>
<div style="left:1014px;top:806px;width:104px;height:22px;background:#fff"></div>
<div class="cell" style="left:0;top:806px;width:48px;height:24px;line-height:24px;text-align:center">6</div>
<div class="pl" style="left:66px;top:816px;width:9px;height:3px"></div>
<div class="pl" style="left:69px;top:813px;width:3px;height:9px"></div>
<div class="pl" style="left:83px;top:816px;width:9px;height:3px"></div>
<div class="cell" style="left:112px;top:681px;height:22px;line-height:22px;color:#000">4891132016504</div>
<div class="cell" style="left:269px;width:101px;text-align:left;top:682px;height:23px;line-height:23px;letter-spacing:0.1px">红双喜红双喜硬...</div>
<div class="cell" style="left:590px;width:102px;text-align:left;top:682px;height:23px;line-height:23px;">盒</div>
<div class="cell" style="left:693px;width:102.4px;text-align:right;top:682px;height:23px;line-height:23px;letter-spacing:0.35px">9.3280</div>
<div class="cell" style="left:800px;width:102.4px;text-align:right;top:682px;height:23px;line-height:23px;letter-spacing:0.35px">0.0000</div>
<div class="cell" style="left:907px;width:102.4px;text-align:right;top:682px;height:23px;line-height:23px;letter-spacing:0.35px">12.0000</div>
<div class="cell" style="left:1014px;width:102.4px;text-align:right;top:682px;height:23px;line-height:23px;font-weight:bold;color:#000;letter-spacing:0.1px">10.0000</div>
<div class="cell" style="left:1121px;width:102.4px;text-align:right;top:682px;height:23px;line-height:23px;letter-spacing:0.35px">1.0000</div>
</body></html>
